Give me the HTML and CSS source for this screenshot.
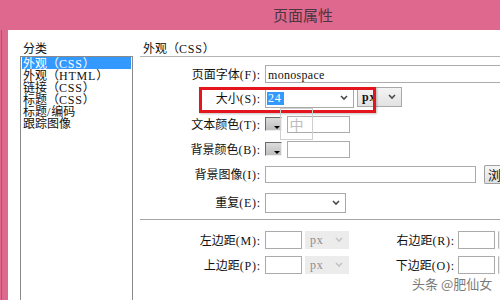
FILE: index.html
```html
<!DOCTYPE html>
<html lang="zh-CN">
<head>
    <meta charset="UTF-8">
    <title>页面属性</title>
    <link rel="stylesheet" href="styles.css">
</head>
<body>
    <div class="window">
        <div class="titlebar">页面属性</div>

        <div class="client">
            <!-- 分类 -->
            <div class="category">
                <div class="cat-title">分类</div>
                <ul class="cat-list">
                    <li class="selected">外观（<span class="en">CSS</span>）</li>
                    <li>外观（<span class="en">HTML</span>）</li>
                    <li>链接（<span class="en">CSS</span>）</li>
                    <li>标题（<span class="en">CSS</span>）</li>
                    <li>标题<span class="en">/</span>编码</li>
                    <li>跟踪图像</li>
                </ul>
            </div>

            <!-- 外观 (CSS) -->
            <div class="panel">
                <div class="panel-title">外观（<span class="en">CSS</span>）</div>

                <div class="form">
                    <div class="lbl">页面字体<span class="en">(F):</span></div>
                    <div class="ctl">
                        <div class="input w-font"><span class="mono">monospace</span></div>
                    </div>

                    <div class="lbl">大小<span class="en">(S):</span></div>
                    <div class="ctl">
                        <div class="select w-size">
                            <span class="en sel-text">24</span>
                            <svg width="8" height="6" viewBox="0 0 8 6"><path d="M1 1l3 3 3-3" fill="none" stroke="#4a4a4a" stroke-width="1.6"/></svg>
                        </div>
                        <div class="select unit">
                            <span class="en">px</span>
                            <svg width="8" height="6" viewBox="0 0 8 6"><path d="M1 1l3 3 3-3" fill="none" stroke="#4a4a4a" stroke-width="1.6"/></svg>
                        </div>
                    </div>

                    <div class="lbl">文本颜色<span class="en">(T):</span></div>
                    <div class="ctl">
                        <div class="swatch"></div>
                        <div class="input w-color"></div>
                    </div>

                    <div class="lbl">背景颜色<span class="en">(B):</span></div>
                    <div class="ctl">
                        <div class="swatch"></div>
                        <div class="input w-color"></div>
                    </div>

                    <div class="lbl">背景图像<span class="en">(I):</span></div>
                    <div class="ctl">
                        <div class="input w-image"></div>
                        <div class="button">浏</div>
                    </div>

                    <div class="lbl">重复<span class="en">(E):</span></div>
                    <div class="ctl">
                        <div class="select w-repeat">
                            <span></span>
                            <svg width="8" height="6" viewBox="0 0 8 6"><path d="M1 1l3 3 3-3" fill="none" stroke="#4a4a4a" stroke-width="1.6"/></svg>
                        </div>
                    </div>
                </div>

                <div class="margins">
                    <div class="m-row">
                        <div class="lbl">左边距<span class="en">(M):</span></div>
                        <div class="input w-margin"></div>
                        <div class="select unit disabled">
                            <span class="en">px</span>
                            <svg width="8" height="6" viewBox="0 0 8 6"><path d="M1 1l3 3 3-3" fill="none" stroke="#c4c4c4" stroke-width="1.6"/></svg>
                        </div>
                        <div class="lbl lbl-right">右边距<span class="en">(R):</span></div>
                        <div class="input w-margin"></div>
                        <div class="select unit disabled stub"></div>
                    </div>
                    <div class="m-row">
                        <div class="lbl">上边距<span class="en">(P):</span></div>
                        <div class="input w-margin"></div>
                        <div class="select unit disabled">
                            <span class="en">px</span>
                            <svg width="8" height="6" viewBox="0 0 8 6"><path d="M1 1l3 3 3-3" fill="none" stroke="#c4c4c4" stroke-width="1.6"/></svg>
                        </div>
                        <div class="lbl lbl-right">下边距<span class="en">(O):</span></div>
                        <div class="input w-margin"></div>
                        <div class="select unit disabled stub"></div>
                    </div>
                </div>
            </div>
        </div>

        <!-- 标注框、输入法提示、水印 -->
        <div class="highlight"></div>
        <div class="ime">中</div>
        <div class="watermark">头条 @肥仙女</div>
    </div>
</body>
</html>
```

FILE: styles.css
```css
* {
    box-sizing: border-box;
}
body {
    margin: 0;
    width: 500px;
    height: 300px;
    overflow: hidden;
    font-family: "Noto Sans CJK SC", sans-serif;
    font-size: 12px;
    color: #111;
}
.en {
    font-family: "Liberation Serif", serif;
    font-size: 12px;
    letter-spacing: 0.8px;
}
.mono {
    font-family: "Liberation Serif", serif;
    font-size: 12px;
    letter-spacing: 0.3px;
}
.window {
    position: relative;
    width: 500px;
    height: 300px;
    overflow: hidden;
    background: #de688e;
}
.titlebar {
    height: 30px;
    padding-left: 273px;
    font-size: 15px;
    line-height: 30px;
    color: #4a3640;
    white-space: nowrap;
}
.client {
    display: flex;
    height: 270px;
    margin-left: 8px;
    overflow: hidden;
    background: #fff;
    box-shadow: -6px 0 0 #de688e, -7px 0 0 #c9476c;
}

/* 分类 */
.category {
    width: 132px;
    padding-left: 12px;
    flex-shrink: 0;
}
.cat-title {
    height: 26px;
    padding-top: 12px;
    line-height: 12px;
    padding-left: 3px;
}
.cat-list {
    list-style: none;
    margin: 0;
    padding: 0 1px;
    width: 113px;
    height: 244px;
    border: 1px solid #8a8a8a;
    border-bottom: none;
}
.cat-list li {
    height: 12px;
    line-height: 12px;
    padding-left: 1px;
    white-space: nowrap;
}
.cat-list li.selected {
    background: #3399ff;
    color: #fff;
}

/* 右侧面板 */
.panel {
    flex: 1;
    min-width: 0;
}
.panel-title {
    height: 27px;
    padding: 12px 0 0 3px;
    line-height: 12px;
    border-bottom: 1px solid #b4b4b4;
}
.form {
    display: grid;
    grid-template-columns: 121px 1fr;
    grid-template-rows: 24px 24px 28px 22px 29px 27px;
    column-gap: 4px;
    align-items: center;
    padding-top: 5px;
}
.lbl {
    text-align: right;
    white-space: nowrap;
    line-height: 12px;
}
.ctl {
    display: flex;
    align-items: center;
    white-space: nowrap;
}
.input {
    height: 18px;
    border: 1px solid #ababab;
    background: #fff;
    padding: 0 2px;
    line-height: 16px;
    flex-shrink: 0;
}
.w-font { width: 236px; border-right: none; }
.w-color { width: 63px; height: 17px; margin-left: 5px; }
.w-image { width: 211px; height: 17px; }
.w-margin { width: 37px; }

.select {
    display: flex;
    align-items: center;
    justify-content: space-between;
    height: 20px;
    border: 1px solid #a9a9a9;
    background: #fff;
    padding: 0 5px 0 1px;
    flex-shrink: 0;
}
.w-size { width: 89px; }
.w-repeat { width: 81px; }
.sel-text {
    background: #3399ff;
    color: #fff;
    line-height: 13px;
    padding: 0 2px 0 1px;
}
.unit {
    width: 45px;
    margin-left: 3px;
    margin-top: -2px;
    padding-left: 4px;
    background: linear-gradient(#f4f4f4, #e2e2e2);
}
.unit .en {
    font-weight: bold;
}
.unit.disabled {
    width: 44px;
    height: 18px;
    margin-top: 0;
    border-color: #ececec;
    background: #ececec;
    color: #8c8c8c;
}
.unit.disabled .en {
    font-weight: normal;
}
.unit.stub {
    width: 4px;
    border-left-color: #b8b8b8;
}
.swatch {
    position: relative;
    width: 17px;
    height: 14px;
    border-top: 1px solid #6a6a6a;
    border-left: 1px solid #6a6a6a;
    border-right: 1px solid #efefef;
    border-bottom: 1px solid #efefef;
    background: linear-gradient(#dcdcdc, #bdbdbd);
}
.swatch::after {
    content: "";
    position: absolute;
    right: 1px;
    bottom: 1px;
    border-left: 3px solid transparent;
    border-right: 3px solid transparent;
    border-top: 3px solid #000;
}
.button {
    margin-left: 8px;
    width: 17px;
    height: 19px;
    border: 1px solid #a0a0a0;
    border-right: none;
    border-radius: 2px 0 0 2px;
    background: linear-gradient(#f6f6f6, #e0e0e0);
    line-height: 17px;
    padding-left: 3px;
    font-size: 13px;
    flex-shrink: 0;
}

/* 边距 */
.margins {
    margin-top: 3px;
    padding-top: 8px;
    border-top: 1px solid #a6a6a6;
}
.m-row {
    display: flex;
    align-items: center;
    height: 24px;
    white-space: nowrap;
}
.m-row + .m-row {
    height: 26px;
}
.m-row .lbl {
    width: 121px;
    margin-right: 4px;
    flex-shrink: 0;
}
.m-row .lbl-right {
    width: 106px;
    margin-right: 3px;
}

/* 覆盖层 */
.highlight {
    position: absolute;
    left: 199px;
    top: 87px;
    width: 177px;
    height: 26px;
    border: 3px solid #e3161e;
    box-shadow: 1px 1px 2px rgba(0,0,0,0.25);
}
.ime {
    position: absolute;
    left: 280px;
    top: 108px;
    width: 33px;
    height: 32px;
    border: 1px solid #cfcfcf;
    color: #bdbdbd;
    font-size: 14px;
    line-height: 30px;
    text-align: center;
}
.watermark {
    position: absolute;
    left: 412px;
    top: 274px;
    font-size: 13px;
    color: #7a7a7a;
    white-space: nowrap;
    text-shadow: 0 0 2px #fff;
}
```
